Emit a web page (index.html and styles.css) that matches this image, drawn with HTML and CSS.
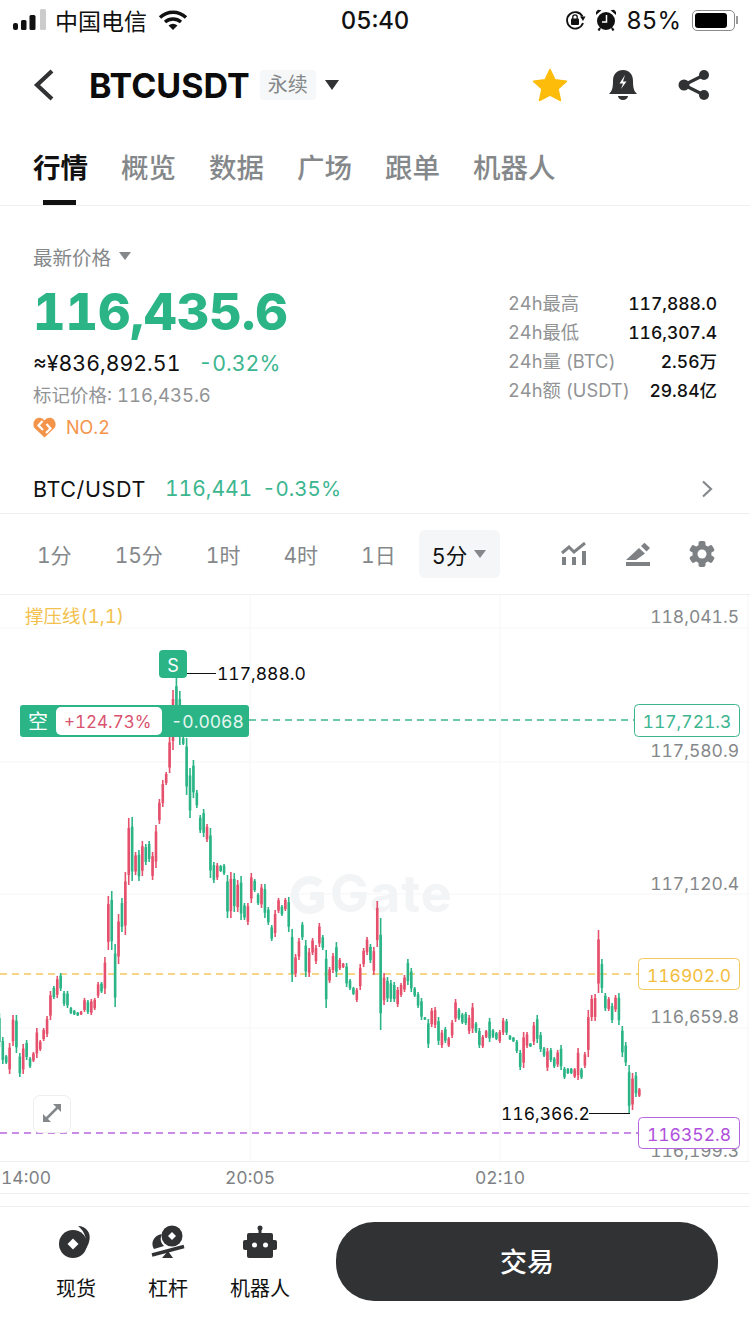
FILE: index.html
```html
<!DOCTYPE html>
<html lang="zh-CN">
<head>
  <meta charset="UTF-8">
  <meta name="viewport" content="width=device-width, initial-scale=1.0">
  <title>BTCUSDT</title>
  <link rel="stylesheet" href="styles.css">
</head>
<body>

  <div class="status-bar">
    <div class="status-left">
      <svg class="signal" width="34" height="22" viewBox="0 0 34 22">
        <rect x="0" y="14" width="5" height="7" rx="2" fill="#111"/>
        <rect x="8" y="11" width="5.5" height="10" rx="1.5" fill="#111"/>
        <rect x="16.5" y="6" width="6" height="15" rx="1.5" fill="#111"/>
        <rect x="27" y="0" width="6" height="21" rx="1.5" fill="#ccc"/>
      </svg>
      <span class="carrier">中国电信</span>
      <svg width="30" height="22" viewBox="0 0 30 22">
        <path d="M2 8.5C9.500 1.500 20.500 1.500 28 8.500" fill="none" stroke="#111" stroke-width="3.400"/>
        <path d="M7 13C11.500 9 18.500 9 23 13" fill="none" stroke="#111" stroke-width="3.400"/>
        <path d="M10.500 16.500Q15 13 19.500 16.500L15 21Z" fill="#111"/>
      </svg>
    </div>
    <div class="clock">05:40</div>
    <div class="status-right">
      <svg width="21" height="22" viewBox="0 0 21 22">
        <path d="M17.500 7.500A8.200 8.200 0 1 0 18 14" fill="none" stroke="#111" stroke-width="1.800"/>
        <path d="M15 7.500L20.500 7.500L18 12Z" fill="#111"/>
        <rect x="6" y="9.500" width="8" height="6.500" rx="1" fill="#111"/>
        <path d="M7.800 10V8A2.200 2.200 0 0 1 12.200 8V10" fill="none" stroke="#111" stroke-width="1.300"/>
      </svg>
      <svg class="alarm" width="20" height="22" viewBox="0 0 20 22">
        <circle cx="10" cy="12" r="9" fill="#111"/>
        <path d="M0 6L5.500 1.200L2 .8Q-1 3 0 6ZM20 6L14.500 1.200L18 .8Q21 3 20 6Z" fill="#111"/>
        <path d="M10.500 6V13H6" fill="none" stroke="#fff" stroke-width="1.500"/>
        <path d="M4 19L2.500 21.500M16 19L17.500 21.500" stroke="#111" stroke-width="2.200"/>
      </svg>
      <span class="battery-text">85%</span>
      <div class="battery"><div class="battery-fill"></div></div>
      <div class="battery-nub"></div>
    </div>
  </div>

  <div class="header">
    <div class="header-left">
      <svg class="back" width="22" height="32" viewBox="0 0 22 32">
        <path d="M19 2L4 16L19 30" fill="none" stroke="#303234" stroke-width="4.200"/>
      </svg>
      <span class="symbol">BTCUSDT</span>
      <span class="tag">永续</span>
      <div class="caret caret-dark"></div>
    </div>
    <div class="header-right">
      <svg width="36" height="34" viewBox="0 0 36 34">
        <path d="M18 1.500L23 11.800L34.500 13.300L26 21L28.500 32.500L18 27L7.500 32.500L10 21L1.500 13.300L13 11.800Z" fill="#fdbc09" stroke="#fdbc09" stroke-width="1.500" stroke-linejoin="round"/>
      </svg>
      <svg width="30" height="32" viewBox="0 0 30 32">
        <path d="M1 25C4 22 5 19 5 12C5 5 9 1 15 1C21 1 25 5 25 12C25 19 26 22 29 25Z" fill="#303234"/>
        <path d="M10 27H20A5 4 0 0 1 10 27Z" fill="#303234"/>
        <path d="M17 6L11.500 14.500H15L13 20L18.500 12.500H15Z" fill="#fff"/>
      </svg>
      <svg width="32" height="32" viewBox="0 0 32 32">
        <path d="M26 6L6 16L26 26" fill="none" stroke="#303234" stroke-width="3.200"/>
        <circle cx="26" cy="6" r="5" fill="#303234"/>
        <circle cx="6" cy="16" r="5.500" fill="#303234"/>
        <circle cx="26" cy="26" r="5" fill="#303234"/>
      </svg>
    </div>
  </div>

  <div class="tabs">
    <div class="tab active">行情</div>
    <div class="tab">概览</div>
    <div class="tab">数据</div>
    <div class="tab">广场</div>
    <div class="tab">跟单</div>
    <div class="tab">机器人</div>
  </div>

  <div class="price-block">
    <div class="price-left">
      <div class="price-label">最新价格<div class="caret caret-grey"></div></div>
      <div class="last-price">116,435.6</div>
      <div class="cny-row"><span>≈¥836,892.51</span><span class="up-green">-0.32%</span></div>
      <div class="mark-price">标记价格: 116,435.6</div>
      <div class="rank">
        <svg width="23" height="21" viewBox="0 0 23 21">
          <path d="M11.500 20.500L1.500 11C-1 7.500 1 1 6 .8C8.500 .7 10.500 2 11.500 3.500C12.500 2 14.500 .7 17 .8C22 1 24 7.500 21.500 11Z" fill="#f4944a"/>
          <path d="M9.500 4L5.500 8.500L10 13M13.500 7L17.500 11.500L13 16" fill="none" stroke="#fff" stroke-width="2.200"/>
        </svg>
        <span>NO.2</span>
      </div>
    </div>
    <div class="stats">
      <div class="stat"><span class="stat-name">24h最高</span><span class="stat-value">117,888.0</span></div>
      <div class="stat"><span class="stat-name">24h最低</span><span class="stat-value">116,307.4</span></div>
      <div class="stat"><span class="stat-name">24h量 (BTC)</span><span class="stat-value">2.56万</span></div>
      <div class="stat"><span class="stat-name">24h额 (USDT)</span><span class="stat-value">29.84亿</span></div>
    </div>
  </div>

  <div class="pair-row">
    <span class="pair-name">BTC/USDT</span>
    <span class="pair-price">116,441</span>
    <span class="pair-change">-0.35%</span>
    <svg class="chevron" width="12" height="18" viewBox="0 0 12 18">
      <path d="M2 1.500L10 9L2 16.500" fill="none" stroke="#85888a" stroke-width="2.200"/>
    </svg>
  </div>

  <div class="interval-row">
    <div class="interval">1分</div>
    <div class="interval">15分</div>
    <div class="interval">1时</div>
    <div class="interval">4时</div>
    <div class="interval">1日</div>
    <div class="interval-selected">5分<div class="caret caret-grey"></div></div>
    <div class="chart-tools">
      <svg width="26" height="24" viewBox="0 0 26 24">
        <path d="M1 11L8 5L13 10L24 1" fill="none" stroke="#7e8184" stroke-width="3"/>
        <rect x="1" y="15" width="4" height="8" fill="#7e8184"/>
        <rect x="11" y="15" width="4" height="8" fill="#7e8184"/>
        <rect x="21" y="9" width="4" height="14" fill="#7e8184"/>
      </svg>
      <svg width="26" height="24" viewBox="0 0 26 24">
        <path d="M1 18L14 6L20 11.500L11 18Z" fill="#7e8184"/>
        <path d="M16 4L19.500 .8L25 6L21.500 9.500Z" fill="#7e8184"/>
        <rect x="1" y="20" width="24" height="4" fill="#7e8184"/>
      </svg>
      <svg width="26" height="26" viewBox="0 0 26 26">
        <g fill="#7e8184">
          <circle cx="13" cy="13" r="9.500"/>
          <rect x="9.500" y="0" width="7" height="26" rx="2"/>
          <rect x="9.500" y="0" width="7" height="26" rx="2" transform="rotate(60 13 13)"/>
          <rect x="9.500" y="0" width="7" height="26" rx="2" transform="rotate(120 13 13)"/>
        </g>
        <circle cx="13" cy="13" r="4.500" fill="#fff"/>
      </svg>
    </div>
  </div>

  <div class="chart">
    <svg id="chart" width="750" height="566" viewBox="0 595 750 566">
      <g class="grid">
        <path d="M0 628H750M0 762H750M0 894H750M0 1028H750M250 595V1161M500 595V1161M748 595V1161"/>
      </g>
      <g class="watermark">
        <path d="M320 884A15 15 0 1 0 320 906V896H310" fill="none" stroke="#f2f4f5" stroke-width="8"/>
        <text x="330" y="912">Gate</text>
      </g>
      <path class="dash dash-yellow" d="M0 974H638"/>
      <path class="dash dash-purple" d="M0 1133H638"/>
      <g id="candles"></g>
      <path class="dash dash-green" d="M249 720H634"/>

      <text class="legend" x="25" y="623">撑压线(1,1)</text>
      <text class="axis" x="739" y="623">118,041.5</text>
      <text class="axis" x="739" y="757">117,580.9</text>
      <text class="axis" x="739" y="890">117,120.4</text>
      <text class="axis" x="739" y="1023">116,659.8</text>
      <text class="axis" x="739" y="1157">116,199.3</text>

      <rect class="box box-green" x="634.500" y="704.500" width="105" height="32" rx="4"/>
      <text class="box-text fill-green" x="687" y="728">117,721.3</text>
      <rect class="box box-yellow" x="638.500" y="958.500" width="101" height="31" rx="4"/>
      <text class="box-text fill-yellow" x="689" y="982">116902.0</text>
      <rect class="box box-purple" x="638.500" y="1117.500" width="101" height="31" rx="4"/>
      <text class="box-text fill-purple" x="689" y="1141">116352.8</text>

      <path class="tick" d="M187 673.500H216M589 1113.500H630"/>
      <text class="extreme" x="217" y="680">117,888.0</text>
      <text class="extreme" x="501" y="1120">116,366.2</text>
      <rect class="s-tag" x="159" y="650" width="28" height="28" rx="4"/>
      <text class="s-text" x="173" y="672">S</text>

      <rect class="s-tag" x="20" y="705" width="229" height="32" rx="3"/>
      <rect class="pos-pill" x="56" y="707" width="106" height="28" rx="5"/>
      <text class="pos-side" x="28" y="729">空</text>
      <text class="pos-pnl" x="64" y="728">+124.73%</text>
      <text class="pos-size" x="171" y="728">-0.0068</text>

      <rect class="expand" x="33.500" y="1095.500" width="37" height="37" rx="6"/>
      <path class="expand-arrow" d="M45 1120L59 1106"/>
      <path class="expand-head" d="M53 1104H61V1112ZM43 1114V1122H51Z"/>
    </svg>
  </div>

  <div class="time-axis">
    <span>14:00</span>
    <span class="time-mid">20:05</span>
    <span class="time-last">02:10</span>
  </div>

  <div class="footer-gap"></div>

  <div class="footer">
    <div class="foot-item">
      <svg width="34" height="34" viewBox="0 0 34 34">
        <path d="M19 1C27 1 33 8 30 17C29 21 27 24 24 25C30 17 26 6 19 1Z" fill="#303234"/>
        <circle cx="14" cy="19" r="14" fill="#303234"/>
        <path d="M14 13.500L19.500 19L14 24.500L8.500 19Z" fill="#fff"/>
      </svg>
      <span>现货</span>
    </div>
    <div class="foot-item">
      <svg width="34" height="34" viewBox="0 0 34 34">
        <circle cx="21" cy="11" r="10.500" fill="#303234"/>
        <path d="M21 7L25 11L21 15L17 11Z" fill="#fff"/>
        <path d="M11 9C3 10 -1 18 3 24L13 21C9 17 9 13 11 9Z" fill="#303234"/>
        <path d="M1 30L33 21.500" stroke="#303234" stroke-width="3.400"/>
        <path d="M17 26L22 33H11Z" fill="#303234"/>
      </svg>
      <span>杠杆</span>
    </div>
    <div class="foot-item">
      <svg width="34" height="34" viewBox="0 0 34 34">
        <circle cx="17" cy="3" r="2.500" fill="#303234"/>
        <rect x="15.500" y="3" width="3" height="6" fill="#303234"/>
        <rect x="4" y="8" width="26" height="25" rx="2" fill="#303234"/>
        <rect x="0" y="15" width="34" height="10" rx="2" fill="#303234"/>
        <circle cx="11.500" cy="20" r="2.500" fill="#fff"/>
        <circle cx="22.500" cy="20" r="2.500" fill="#fff"/>
      </svg>
      <span>机器人</span>
    </div>
    <div class="trade-btn">交易</div>
  </div>

  <script src="chart.js"></script>
</body>
</html>
```

FILE: styles.css
```css
body {
  font-family: Inter, "Noto Sans CJK SC", sans-serif;
  font-variant-numeric: tabular-nums;
  width: 750px;
  height: 1334px;
  margin: 0;
  overflow: hidden;
  background-color: #fff;
  color: #111;
}

.caret {
  width: 0;
  height: 0;
  border-left: 7px solid transparent;
  border-right: 7px solid transparent;
}

.caret-dark {
  border-top: 10px solid #303234;
}

.caret-grey {
  border-left-width: 6px;
  border-right-width: 6px;
  border-top: 8px solid #85888a;
}

/* status bar */
.status-bar {
  display: flex;
  align-items: center;
  justify-content: space-between;
  height: 40px;
  padding: 0 12px 0 13px;
  position: relative;
}

.status-left,
.status-right {
  display: flex;
  align-items: center;
}

.carrier {
  font-size: 23px;
  margin: 0 11px 0 8px;
}

.clock {
  position: absolute;
  left: 0;
  right: 0;
  text-align: center;
  font-size: 24px;
  font-weight: 500;
}

.alarm {
  margin: 0 10px 0 10px;
}

.battery-text {
  font-size: 24px;
  margin-right: 11px;
}

.battery {
  width: 43px;
  height: 21px;
  border: 1.5px solid #8a8a8a;
  border-radius: 5px;
  padding: 2px;
  box-sizing: border-box;
}

.battery-fill {
  width: 32px;
  height: 100%;
  background-color: #000;
  border-radius: 3px;
}

.battery-nub {
  width: 2px;
  height: 8px;
  background-color: #9a9a9a;
  margin-left: 1px;
}

/* header */
.header {
  display: flex;
  align-items: center;
  justify-content: space-between;
  height: 90px;
  padding: 0 40px 0 33px;
}

.header-left,
.header-right {
  display: flex;
  align-items: center;
}

.header-right {
  gap: 40px;
}

.back {
  margin-right: 34px;
}

.symbol {
  font-size: 34px;
  font-weight: 700;
  color: #0c0c0c;
}

.tag {
  margin: 0 9px 0 10px;
  padding: 0 8px;
  line-height: 30px;
  font-size: 20px;
  color: #85888a;
  background-color: #f5f7f8;
  border-radius: 4px;
}

/* tabs */
.tabs {
  display: flex;
  gap: 33px;
  height: 75px;
  padding-left: 33px;
  border-bottom: 1px solid #eeeff0;
}

.tab {
  position: relative;
  font-size: 27.500px;
  line-height: 40px;
  padding-top: 18px;
  color: #85888a;
  font-weight: 500;
}

.tab.active {
  color: #111;
  font-weight: 700;
}

.tab.active::after {
  content: "";
  position: absolute;
  left: 10px;
  width: 33px;
  top: 70px;
  height: 5px;
  background-color: #111;
}

/* price */
.price-block {
  display: flex;
  justify-content: space-between;
  height: 260px;
  padding: 0 33px;
}

.price-left {
  padding-top: 36px;
}

.price-label {
  display: flex;
  align-items: center;
  gap: 8px;
  height: 28px;
  font-size: 19.500px;
  color: #85888a;
}

.last-price {
  font-size: 50.400px;
  line-height: 60px;
  margin-top: 12px;
  font-weight: 800;
  color: #2bb586;
}

.cny-row {
  display: flex;
  gap: 18px;
  height: 30px;
  line-height: 30px;
  margin-top: 6px;
  font-size: 21.300px;
}

.up-green {
  color: #3cb68f;
}

.mark-price {
  height: 26px;
  line-height: 26px;
  margin-top: 4px;
  font-size: 18.500px;
  color: #919395;
}

.rank {
  display: flex;
  align-items: center;
  gap: 10px;
  height: 26px;
  margin-top: 6px;
  font-size: 18px;
  color: #f4944a;
}

.stats {
  width: 209px;
  padding-top: 83px;
}

.stat {
  display: flex;
  justify-content: space-between;
  height: 29px;
  line-height: 29px;
}

.stat-name {
  font-size: 18.300px;
  color: #919395;
}

.stat-value {
  font-size: 17.500px;
  font-weight: 500;
  color: #111;
}

/* pair */
.pair-row {
  display: flex;
  align-items: center;
  height: 45px;
  padding: 0 37px 2px 33px;
  font-size: 21px;
  border-bottom: 1px solid #eeeff0;
}

.pair-name {
  font-size: 21.500px;
  letter-spacing: .6px;
}

.pair-price {
  margin-left: 19px;
  color: #3cb68f;
}

.pair-change {
  margin-left: 10px;
  font-size: 20.500px;
  color: #3cb68f;
}

.chevron {
  margin-left: auto;
}

/* intervals */
.interval-row {
  display: flex;
  align-items: center;
  height: 80px;
  padding: 0 35px 0 37px;
  font-size: 21px;
  border-bottom: 1px solid #eeeff0;
}

.interval {
  margin-right: 43px;
  color: #85888a;
}

.interval-selected {
  display: flex;
  align-items: center;
  gap: 7px;
  height: 48px;
  margin-left: -20px;
  padding: 0 14px 0 13px;
  border-radius: 6px;
  background-color: #f5f6f7;
  font-size: 21.500px;
  color: #111;
}

.chart-tools {
  display: flex;
  align-items: center;
  gap: 38px;
  margin-left: auto;
}

/* chart */
.chart {
  height: 566px;
  border-bottom: 1px solid #eeeff0;
}

#chart {
  display: block;
}

.grid path {
  fill: none;
  stroke: #f6f6f7;
  stroke-width: 1;
}

.watermark text {
  font-size: 52px;
  font-weight: 700;
  letter-spacing: 1px;
  fill: #f2f4f5;
}

.dash {
  fill: none;
  stroke-width: 1.500;
  stroke-dasharray: 7 5;
}

.dash-green {
  stroke: #3cb68f;
}

.dash-yellow {
  stroke: #f3c95f;
}

.dash-purple {
  stroke: #b663e0;
}

.legend {
  font-size: 18.500px;
  fill: #f2c14e;
}

.axis {
  font-size: 17.500px;
  fill: #85888a;
  text-anchor: end;
}

.box {
  fill: #fff;
  stroke-width: 1;
}

.box-green {
  stroke: #3cb68f;
}

.box-yellow {
  stroke: #f3c95f;
}

.box-purple {
  stroke: #b663e0;
}

.box-text {
  font-size: 17.500px;
  text-anchor: middle;
}

.fill-green {
  fill: #3cb68f;
}

.fill-yellow {
  fill: #f3bd3c;
}

.fill-purple {
  fill: #b04fdc;
}

.tick {
  fill: none;
  stroke: #111;
  stroke-width: 1;
}

.extreme {
  font-size: 17.500px;
  fill: #0c0c0c;
}

.s-tag {
  fill: #2bb586;
}

.s-text {
  font-size: 18px;
  fill: #fff;
  text-anchor: middle;
}

.pos-pill {
  fill: #fff;
}

.pos-side {
  font-size: 20px;
  fill: #fff;
}

.pos-pnl {
  font-size: 17px;
  fill: #d9536f;
}

.pos-size {
  font-size: 17.500px;
  fill: #e6f6f0;
}

.expand {
  fill: #fff;
  stroke: #eeeeef;
}

.expand-arrow {
  stroke: #85888a;
  stroke-width: 2.500;
}

.expand-head {
  fill: #85888a;
}

/* time axis */
.time-axis {
  position: relative;
  height: 31px;
  line-height: 31px;
  padding-left: 1px;
  font-size: 17.500px;
  color: #7e8184;
  border-bottom: 1px solid #eeeff0;
}

.time-mid {
  position: absolute;
  left: 225px;
}

.time-last {
  position: absolute;
  left: 475px;
}

.footer-gap {
  height: 12px;
  border-bottom: 1px solid #eeeff0;
}

/* footer */
.footer {
  display: flex;
  padding: 15px 32px 0 43px;
}

.foot-item {
  display: flex;
  flex-direction: column;
  align-items: center;
  width: 66px;
  margin-right: 26px;
  font-size: 20px;
  padding-top: 3px;
}

.foot-item span {
  margin-top: 14px;
  white-space: nowrap;
}

.foot-item:nth-child(3) {
  margin-right: 0;
}

.trade-btn {
  width: 382px;
  height: 79px;
  margin-left: 43px;
  line-height: 81px;
  text-align: center;
  font-size: 27px;
  font-weight: 500;
  color: #fff;
  background-color: #303234;
  border-radius: 38px;
}
```

FILE: chart.js
```js
// candles left to right: colour, then top and bottom of the wick in page pixels
const candleData = `
g1013,1047 g1037,1064 g1055,1064 r1043,1074 r1015,1046 g1015,1053 g1053,1077 r1044,1074 g1040,1060 g1057,1068
r1052,1062 r1028,1058 r1040,1051 r1028,1041 r1016,1037 r991,1020 g986,999 r976,998 g973,991 g991,1006
g991,1008 g1007,1014 g1010,1015 g1012,1016 r1011,1015 r998,1012 g1000,1014 r999,1015 r998,1010 r982,998
g982,993 r957,994 r896,950 g891,950 g944,1007 r914,964 g898,932 r872,935 r818,885 g817,881
r852,875 g850,881 r841,876 g844,865 g841,862 r852,880 r825,868 r799,824 r780,807 r772,785
r737,773 r690,750 g678,733 g691,745 g737,745 g738,795 g768,818 g760,798 g790,808 g815,833
g809,837 r824,842 g828,878 g862,883 r863,880 g865,872 g864,875 g875,918 r872,918 g873,912
r880,912 g876,920 g903,920 r903,925 r873,903 g879,892 g893,905 r884,908 g884,918 g907,925
g925,941 r910,937 r898,913 g905,916 r898,911 g897,932 g929,982 r954,977 r938,960 g922,940
g940,977 r948,977 r938,955 r945,964 r923,947 g935,950 g950,1008 r967,983 r953,973 g942,977
r958,970 r963,968 g963,987 g979,990 g987,995 r988,1002 r964,990 r948,967 r937,955 g944,963
r947,975 r901,947 g918,1030 r973,1005 g977,1002 g980,1002 g982,1002 r987,1007 r983,997 r975,992
g959,985 g968,992 g987,997 g992,1008 g998,1020 g1017,1020 g1019,1048 r1008,1027 r1007,1028 g1017,1045
r1030,1048 g1027,1043 r1037,1047 r1020,1038 r999,1022 g1008,1020 g1013,1024 g1012,1025 r1015,1034 r1003,1033
g1022,1033 g1028,1048 r1035,1048 r1030,1038 g1018,1042 g1029,1038 g1032,1040 r1030,1043 r1018,1035 g1019,1035
g1035,1040 g1037,1042 g1040,1053 g1050,1070 r1032,1068 r1032,1048 g1043,1047 r1022,1045 g1015,1043 g1032,1052
g1047,1057 r1048,1071 g1048,1062 g1057,1068 r1050,1067 g1045,1070 g1067,1079 g1068,1074 g1068,1074 r1068,1078
r1048,1080 g1068,1079 r1052,1068 r1010,1057 r995,1021 r994,1021 r930,993 g959,993 g993,1011 r997,1011
g1003,1023 r995,1012 g993,1025 g1026,1057 g1042,1066 g1065,1113 r1073,1110 g1072,1097 r1088,1097
`.trim().split(/\s+/);

const colors = { g: "#2bb586", r: "#e5506c" };
const svgNS = "http://www.w3.org/2000/svg";
const group = document.getElementById("candles");

function addRect(x, y, w, h, fill) {
  const rect = document.createElementNS(svgNS, "rect");
  rect.setAttribute("x", x);
  rect.setAttribute("y", y);
  rect.setAttribute("width", w);
  rect.setAttribute("height", h);
  rect.setAttribute("fill", fill);
  group.appendChild(rect);
}

candleData.forEach((item, i) => {
  const color = colors[item[0]];
  const [top, bottom] = item.slice(1).split(",").map(Number);
  const x = -0.6 + 3.404 * i;
  const inset = (bottom - top) * 0.15;

  addRect(x - 0.8, top, 1.6, bottom - top, color);
  addRect(x - 1.3, top + inset, 2.6, bottom - top - inset * 2, color);
});
```
